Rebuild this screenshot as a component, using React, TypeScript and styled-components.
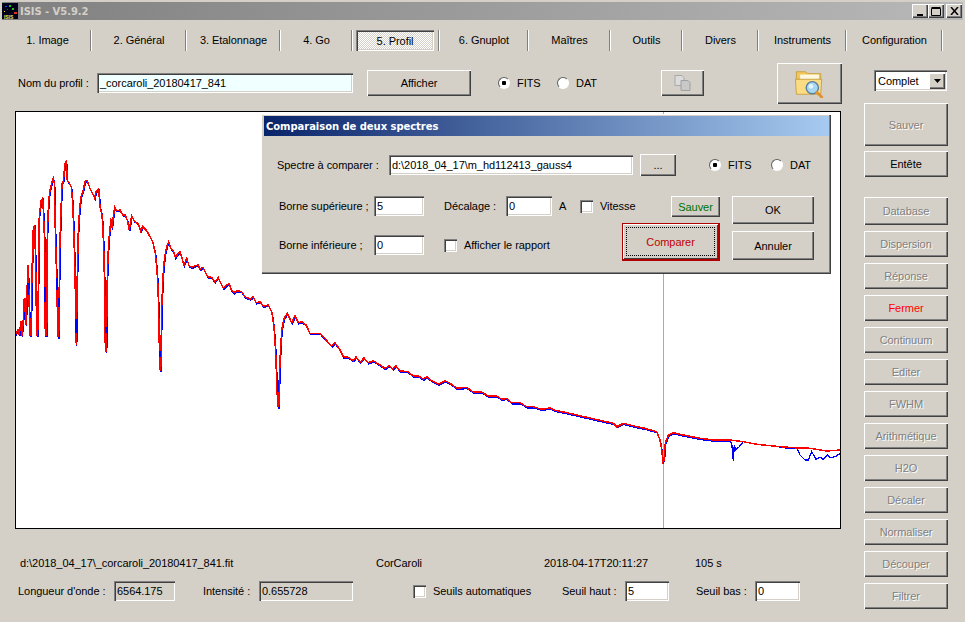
import React from 'react'
import styled, { createGlobalStyle, css } from 'styled-components'

const GlobalStyle = createGlobalStyle`
  html, body {
    margin: 0;
    padding: 0;
    background: #d4d0c8;
    overflow: hidden;
  }
  * {
    box-sizing: border-box;
  }
`

const raised = css`
  background-color: #d4d0c8;
  box-shadow: inset 1px 1px #fff, inset -1px -1px #404040, inset -2px -2px #808080;
`

const sunken = css`
  box-shadow: inset 1px 1px #808080, inset 2px 2px #404040, inset -1px -1px #fff, inset -2px -2px #d4d0c8;
`

const Window = styled.div`
  width: 965px;
  height: 622px;
  padding-top: 2px;
  background: #d4d0c8;
  color: #000;
  font-family: 'Liberation Sans', Arial, sans-serif;
  font-size: 11px;
  letter-spacing: -0.05px;
  overflow: hidden;
`

const TitleBar = styled.header`
  display: flex;
  align-items: center;
  height: 18px;
  margin-left: 2px;
  margin-right: 2px;
  background: linear-gradient(90deg, #808080, #b8b8b8);
`

const TitleText = styled.span`
  flex: 1;
  margin-left: 2px;
  color: #d4d0c8;
  font-family: 'DejaVu Sans', Verdana, sans-serif;
  font-size: 10px;
  font-weight: 700;
`

const WinControls = styled.div`
  display: flex;
  margin-right: 1px;
`

const WinButton = styled.button<{ $gap?: number }>`
  ${raised}
  width: 16px;
  height: 14px;
  margin-left: ${p => p.$gap ?? 0}px;
  padding: 0;
  border: 0;
  display: flex;
  align-items: center;
  justify-content: center;
`

const TabRow = styled.nav`
  display: flex;
  height: 21px;
  margin-top: 10px;
  padding-left: 4px;
`

const TabCell = styled.div<{ $width: number }>`
  display: flex;
  width: ${p => p.$width}px;
  border-right: 1px solid #fff;
  box-shadow: inset -1px 0 #808080;
`

const TabLabel = styled.div<{ $active?: boolean }>`
  flex: 1;
  display: flex;
  align-items: center;
  justify-content: center;
  padding-bottom: 2px;
  ${p =>
    p.$active &&
    css`
      margin: 0 5px 0 3px;
      padding: 1px 0 0;
      background-color: #fff;
      background-image: conic-gradient(#d4d0c8 25%, #fff 0 50%, #d4d0c8 0 75%, #fff 0);
      background-size: 2px 2px;
      ${sunken}
    `}
`

const Workspace = styled.main`
  display: flex;
  margin-top: 11px;
`

const LeftColumn = styled.section`
  width: 864px;
`

const FormRow = styled.div`
  display: flex;
  align-items: center;
  height: 42px;
`

const Label = styled.span<{ $left?: number; $width?: number }>`
  flex: none;
  margin-left: ${p => p.$left ?? 0}px;
  width: ${p => (p.$width ? `${p.$width}px` : 'auto')};
  white-space: nowrap;
`

const TextField = styled.div<{ $width: number; $left?: number; $height?: number; $tint?: string }>`
  ${sunken}
  flex: none;
  display: flex;
  align-items: center;
  width: ${p => p.$width}px;
  height: ${p => p.$height ?? 20}px;
  margin-left: ${p => p.$left ?? 0}px;
  padding-left: 3px;
  background: ${p => p.$tint ?? '#fff'};
  white-space: nowrap;
  overflow: hidden;
`

const PushButton = styled.button<{ $width: number; $height?: number; $left?: number; $muted?: boolean; $color?: string }>`
  ${raised}
  flex: none;
  display: flex;
  align-items: center;
  justify-content: center;
  width: ${p => p.$width}px;
  height: ${p => p.$height ?? 26}px;
  margin-left: ${p => p.$left ?? 0}px;
  padding: 0;
  border: 0;
  font: inherit;
  letter-spacing: inherit;
  color: ${p => p.$color ?? (p.$muted ? '#808080' : '#000')};
  text-shadow: ${p => (p.$muted ? '1px 1px 0 #fff' : 'none')};
`

const RadioDot = styled.span<{ $left?: number; $on?: boolean }>`
  flex: none;
  width: 12px;
  height: 12px;
  margin-left: ${p => p.$left ?? 0}px;
  margin-right: 7px;
  border-radius: 50%;
  border: 1px solid;
  border-color: #606060 #fff #fff #606060;
  background: ${p => (p.$on ? 'radial-gradient(circle, #000 0 2px, #fff 2.5px)' : '#fff')};
`

const CheckBox = styled.span<{ $left?: number }>`
  ${sunken}
  flex: none;
  width: 13px;
  height: 13px;
  margin-left: ${p => p.$left ?? 0}px;
  margin-right: 7px;
  background: #fff;
`

const Plot = styled.div`
  position: relative;
  width: 826px;
  height: 418px;
  margin-top: 7px;
  margin-left: 15px;
  border: 1px solid #000;
  background: #fff;
`

const PlotSvg = styled.svg`
  display: block;
`

const Dialog = styled.div`
  position: absolute;
  left: 245px;
  top: 2px;
  width: 570px;
  height: 160px;
  padding: 2px 2px 0 3px;
  ${raised}
`

const DialogTitle = styled.div`
  display: flex;
  align-items: center;
  height: 20px;
  padding-left: 2px;
  background: linear-gradient(90deg, #0a246a, #a6caf0);
  color: #fff;
  font-family: 'DejaVu Sans', Verdana, sans-serif;
  font-size: 10px;
  font-weight: 700;
`

const DialogRow = styled.div`
  display: flex;
  align-items: center;
  height: 22px;
  margin-top: 18px;
`

const DialogLower = styled.div`
  display: grid;
  grid-template-columns: 346px 98px 82px;
  column-gap: 12px;
  margin-top: 20px;
`

const FieldStack = styled.div`
  display: flex;
  flex-direction: column;
  gap: 19px;
`

const FieldRow = styled.div`
  display: flex;
  align-items: center;
  height: 20px;
`

const ActionStack = styled.div<{ $gap: number }>`
  display: flex;
  flex-direction: column;
  align-items: flex-end;
  gap: ${p => p.$gap}px;
`

const FocusButton = styled.button`
  width: 98px;
  height: 38px;
  padding: 3px;
  border: solid #b00000;
  border-width: 1px 2px 2px 1px;
  background: #d4d0c8;
  box-shadow: inset 1px 1px #fff, inset -1px -1px #404040;
  font: inherit;
  letter-spacing: inherit;
  color: #c00000;
`

const FocusInner = styled.span`
  display: flex;
  align-items: center;
  justify-content: center;
  height: 100%;
  border: 1px dotted #000;
`

const InfoRow = styled.div`
  display: flex;
  align-items: center;
  height: 16px;
  margin-top: 26px;
`

const ReadoutRow = styled.div`
  display: flex;
  align-items: center;
  height: 20px;
  margin-top: 10px;
`

const ReadOnly = styled(TextField)`
  background: #d4d0c8;
`

const RightColumn = styled.aside`
  width: 84px;
  padding-top: 8px;
`

const Combo = styled.div`
  ${sunken}
  display: flex;
  align-items: center;
  justify-content: space-between;
  width: 73px;
  height: 21px;
  margin-left: 10px;
  padding: 2px 2px 2px 4px;
  background: #fff;
`

const ComboArrow = styled.span`
  ${raised}
  display: flex;
  align-items: center;
  justify-content: center;
  width: 16px;
  height: 16px;
`

const SideStack = styled.div<{ $top: number }>`
  display: flex;
  flex-direction: column;
  gap: 6px;
  margin-top: ${p => p.$top}px;
`

const tabs = [
  { label: '1. Image', width: 88 },
  { label: '2. Général', width: 95 },
  { label: '3. Etalonnage', width: 94 },
  { label: '4. Go', width: 72 },
  { label: '5. Profil', width: 87, active: true },
  { label: '6. Gnuplot', width: 89 },
  { label: 'Maîtres', width: 82 },
  { label: 'Outils', width: 72 },
  { label: 'Divers', width: 76 },
  { label: 'Instruments', width: 88 },
  { label: 'Configuration', width: 96 },
]

const sideButtons = [
  'Database',
  'Dispersion',
  'Réponse',
  'Fermer',
  'Continuum',
  'Editer',
  'FWHM',
  'Arithmétique',
  'H2O',
  'Décaler',
  'Normaliser',
  'Découper',
  'Filtrer',
]

type Pt = [number, number]

// points read off 3x crops of the curve, origin is the crop corner
const fromCrop = (ox: number, oy: number, pts: Pt[]): Pt[] =>
  pts.map(([x, y]) => [ox + x / 3 - 16, oy + y / 3 - 112])

const blueShift = (pts: Pt[]): Pt[] => pts.map(([x, y]) => [x + 0.5, y + 1.2])

const toPath = (pts: Pt[]) => pts.map(([x, y]) => `${x.toFixed(1)},${y.toFixed(1)}`).join(' ')

const partA = fromCrop(10, 150, [
  [16, 555], [24, 540], [28, 555], [33, 512], [36, 558], [41, 492], [43, 445], [46, 445], [48, 525], [52, 400],
  [54, 345], [57, 440], [60, 555], [63, 555], [66, 350], [68, 325], [70, 235], [74, 228], [77, 350], [80, 555],
  [83, 555], [86, 320], [88, 195], [94, 150], [98, 145], [100, 180], [104, 280], [106, 555], [110, 555], [112, 250],
  [116, 150], [120, 120], [126, 95], [130, 85], [133, 100], [136, 240], [141, 420], [143, 560], [146, 560], [149, 300],
  [153, 180], [156, 100], [160, 95], [165, 40], [169, 35], [172, 90], [178, 100], [184, 110], [188, 160], [191, 235],
  [195, 370], [198, 550], [199, 585], [202, 370], [205, 245], [209, 175], [213, 140], [220, 120], [226, 92], [232, 92],
  [240, 115], [250, 135], [254, 145], [258, 125], [266, 118], [270, 170], [275, 190], [278, 220], [281, 295], [284, 420],
  [286, 590], [289, 605], [292, 380], [296, 270], [300, 240], [302, 205], [306, 235], [310, 200], [314, 172], [320, 182],
  [330, 180], [338, 195], [345, 195], [352, 210], [358, 240], [365, 198], [372, 212], [385, 222], [392, 243], [398, 230],
  [410, 242], [420, 260], [428, 275], [436, 310], [440, 350], [444, 410], [447, 530], [449, 655], [452, 662], [455, 470],
  [459, 380], [462, 340], [465, 315], [470, 290], [476, 275], [482, 295], [490, 302], [496, 322], [505, 310], [510, 305],
  [516, 325], [522, 345], [530, 325], [537, 347], [546, 352], [555, 347], [564, 345], [570, 358], [578, 352], [586, 365],
  [593, 380], [605, 382], [614, 395], [625, 383], [640, 415], [650, 405], [658, 402], [664, 420], [672, 428], [680, 422],
  [695, 425], [705, 440], [720, 447], [730, 440], [738, 458], [750, 455], [760, 468], [775, 465], [785, 485], [792, 530],
  [797, 610], [800, 690], [803, 770], [806, 770], [810, 630],
])

const partB = fromCrop(280, 270, [
  [5, 180], [12, 145], [22, 130], [35, 158], [45, 137], [55, 158], [65, 155], [78, 165], [90, 190], [120, 190],
  [140, 212], [155, 228], [165, 218], [180, 240], [190, 260], [205, 262], [220, 272], [228, 260], [240, 277], [252, 264],
  [265, 278], [280, 272], [300, 285], [315, 295], [328, 287], [338, 297], [347, 287], [360, 302], [383, 305], [400, 318],
  [415, 318], [430, 327], [440, 320], [455, 332], [475, 342], [495, 332], [515, 343], [530, 355], [560, 352], [580, 366],
  [605, 366], [625, 378], [650, 378], [665, 388], [680, 385], [695, 398], [720, 398], [740, 410], [760, 410], [785, 418],
  [810, 414], [825, 421], [860, 428], [900, 437],
])

const partC = fromCrop(480, 420, [
  [355, 0], [400, 10], [410, 20], [430, 10], [470, 20], [495, 25], [530, 35], [540, 60], [545, 90], [549, 125],
  [552, 120], [556, 70], [565, 45], [580, 38], [620, 47], [660, 55], [700, 60], [750, 60],
])

const redTail = fromCrop(480, 420, [
  [790, 65], [830, 73], [880, 78], [940, 83], [990, 85], [1040, 93], [1082, 90],
])

const blueTail = fromCrop(480, 420, [
  [755, 70], [760, 122], [763, 75], [767, 90], [778, 80], [790, 65], [830, 73], [880, 78], [925, 85], [950, 83],
  [960, 105], [975, 120], [985, 120], [995, 95], [1008, 118], [1020, 112], [1030, 118], [1042, 105], [1050, 113], [1065, 110],
  [1082, 100],
])

const redCurve = [...partA, ...partB, ...partC, ...redTail]
const blueCurve = [...blueShift([...partA, ...partB, ...partC]), ...blueTail]

// blue shows through the red at the bottom of the deep lines
const blueDips: Pt[][] = [
  fromCrop(10, 150, [[54, 400], [54, 435]]),
  fromCrop(10, 150, [[105, 410], [105, 455]]),
  fromCrop(10, 150, [[141, 385], [141, 420]]),
  fromCrop(10, 150, [[146, 445], [146, 470]]),
  fromCrop(10, 150, [[199, 507], [199, 550]]),
  fromCrop(10, 150, [[289, 530], [289, 548]]),
  fromCrop(10, 150, [[451, 603], [451, 620]]),
  fromCrop(10, 150, [[805, 690], [805, 725]]),
]

const Spectrum: React.FC = () => (
  <PlotSvg width={824} height={416} viewBox="0 0 824 416">
    <line x1={647.5} y1={0} x2={647.5} y2={416} stroke="#f0a030" strokeWidth={1} />
    <polyline points={toPath(blueCurve)} fill="none" stroke="#0000ff" strokeWidth={1.3} shapeRendering="crispEdges" />
    <polyline points={toPath(redCurve)} fill="none" stroke="#ff0000" strokeWidth={1.5} shapeRendering="crispEdges" />
    {blueDips.map((dip, i) => (
      <polyline key={i} points={toPath(dip)} fill="none" stroke="#0000ff" strokeWidth={2} shapeRendering="crispEdges" />
    ))}
  </PlotSvg>
)

const AppLogo: React.FC = () => (
  <svg width={16} height={16} viewBox="0 0 16 16">
    <rect width={16} height={16} fill="#000018" />
    <rect x={3} y={3} width={2} height={1} fill="#2040ff" />
    <rect x={7} y={2} width={2} height={2} fill="#20c020" />
    <rect x={10} y={5} width={2} height={2} fill="#20c020" />
    <rect x={5} y={6} width={1} height={1} fill="#2040ff" />
    <rect x={12} y={9} width={3} height={2} fill="#e03020" />
    <rect x={2} y={8} width={1} height={1} fill="#ffe000" />
    <text x={2} y={15.5} fontSize={5} fontFamily="'Liberation Sans', sans-serif" fontWeight={700} fill="#ffe060">
      ISIS
    </text>
  </svg>
)

const FolderSearchIcon: React.FC = () => (
  <svg width={31} height={30} viewBox="0 0 32 32">
    <path d="M2 4h10l2 2h14v6H2z" fill="#f2c75c" stroke="#c9a040" />
    <rect x={6} y={7} width={20} height={8} fill="#fff8e0" />
    <path d="M2 28 1 12h28l-1 16z" fill="#fbdc82" stroke="#c9a040" />
    <circle cx={19} cy={21} r={6.5} fill="#a8d8f0" stroke="#5a7fa0" strokeWidth={1.5} />
    <circle cx={17.5} cy={19.5} r={2.5} fill="#e4f5ff" />
    <path d="m24 26 5 5" stroke="#e09030" strokeWidth={3} strokeLinecap="round" />
  </svg>
)

const CopyIcon: React.FC = () => (
  <svg width={17} height={16} viewBox="0 0 17 16">
    <path d="M1 .5h7l2 2v8H1z" fill="#dcdcdc" stroke="#a8a8a8" />
    <path d="M7 5.500h7l2 2v8H7z" fill="#c8c8c8" stroke="#a0a0a0" />
  </svg>
)

const App: React.FC = () => (
  <Window>
    <GlobalStyle />
    <TitleBar>
      <AppLogo />
      <TitleText>ISIS - V5.9.2</TitleText>
      <WinControls>
        <WinButton>
          <svg width={9} height={9} viewBox="0 0 9 9">
            <rect x={1} y={7} width={6} height={2} fill="#000" />
          </svg>
        </WinButton>
        <WinButton>
          <svg width={10} height={9} viewBox="0 0 10 9">
            <path d="M.5 1.500h9v7h-9zM.5 .5h9" fill="none" stroke="#000" />
          </svg>
        </WinButton>
        <WinButton $gap={2}>
          <svg width={9} height={8} viewBox="0 0 9 8">
            <path d="m1 0 7 8M8 0 1 8" stroke="#000" strokeWidth={1.5} />
          </svg>
        </WinButton>
      </WinControls>
    </TitleBar>

    <TabRow>
      {tabs.map(tab => (
        <TabCell key={tab.label} $width={tab.width}>
          <TabLabel $active={tab.active}>{tab.label}</TabLabel>
        </TabCell>
      ))}
    </TabRow>

    <Workspace>
      <LeftColumn>
        <FormRow>
          <Label $left={18} $width={79}>Nom du profil :</Label>
          <TextField $width={256} $tint="#f0ffff">_corcaroli_20180417_841</TextField>
          <PushButton $width={104} $left={14}>Afficher</PushButton>
          <RadioDot $left={27} $on />
          <Label $width={23}>FITS</Label>
          <RadioDot $left={17} />
          <Label $width={25}>DAT</Label>
          <PushButton $width={43} $left={60}><CopyIcon /></PushButton>
          <PushButton $width={65} $height={41} $left={73}><FolderSearchIcon /></PushButton>
        </FormRow>

        <Plot>
          <Spectrum />
          <Dialog>
            <DialogTitle>Comparaison de deux spectres</DialogTitle>
            <DialogRow>
              <Label $left={13} $width={112}>Spectre à comparer  :</Label>
              <TextField $width={244}>d:\2018_04_17\m_hd112413_gauss4</TextField>
              <PushButton $width={36} $height={22} $left={7}>...</PushButton>
              <RadioDot $left={33} $on />
              <Label $width={26}>FITS</Label>
              <RadioDot $left={17} />
              <Label>DAT</Label>
            </DialogRow>
            <DialogLower>
              <FieldStack>
                <FieldRow>
                  <Label $left={15} $width={95}>Borne supérieure ;</Label>
                  <TextField $width={50}>5</TextField>
                  <Label $left={20} $width={62}>Décalage :</Label>
                  <TextField $width={46}>0</TextField>
                  <Label $left={7} $width={21}>A</Label>
                  <CheckBox />
                  <Label>Vitesse</Label>
                </FieldRow>
                <FieldRow>
                  <Label $left={15} $width={95}>Borne inférieure ;</Label>
                  <TextField $width={50}>0</TextField>
                  <CheckBox $left={20} />
                  <Label>Afficher le rapport</Label>
                </FieldRow>
              </FieldStack>
              <ActionStack $gap={6}>
                <PushButton $width={49} $height={21} $color="#007000">Sauver</PushButton>
                <FocusButton><FocusInner>Comparer</FocusInner></FocusButton>
              </ActionStack>
              <ActionStack $gap={7}>
                <PushButton $width={82} $height={28}>OK</PushButton>
                <PushButton $width={82} $height={29}>Annuler</PushButton>
              </ActionStack>
            </DialogLower>
          </Dialog>
        </Plot>

        <InfoRow>
          <Label $left={20} $width={356}>d:\2018_04_17\_corcaroli_20180417_841.fit</Label>
          <Label $width={168}>CorCaroli</Label>
          <Label $width={151}>2018-04-17T20:11:27</Label>
          <Label>105 s</Label>
        </InfoRow>
        <ReadoutRow>
          <Label $left={18} $width={96}>Longueur d'onde :</Label>
          <ReadOnly $width={61}>6564.175</ReadOnly>
          <Label $left={28} $width={56}>Intensité :</Label>
          <ReadOnly $width={94}>0.655728</ReadOnly>
          <CheckBox $left={60} />
          <Label $width={129}>Seuils automatiques</Label>
          <Label $width={63}>Seuil haut :</Label>
          <TextField $width={44}>5</TextField>
          <Label $left={27} $width={59}>Seuil bas :</Label>
          <TextField $width={45}>0</TextField>
        </ReadoutRow>
      </LeftColumn>

      <RightColumn>
        <Combo>
          Complet
          <ComboArrow>
            <svg width={7} height={4} viewBox="0 0 7 4">
              <path d="M0 0h7L3.500 4z" fill="#000" />
            </svg>
          </ComboArrow>
        </Combo>
        <SideStack $top={12}>
          <PushButton $width={84} $height={43} $muted>Sauver</PushButton>
        </SideStack>
        <SideStack $top={5}>
          <PushButton $width={84}>Entête</PushButton>
        </SideStack>
        <SideStack $top={20}>
          {sideButtons.map((name, i) => (
            <PushButton
              key={name}
              $width={84}
              $height={i === 0 ? 28 : 26}
              $muted={name !== 'Fermer'}
              $color={name === 'Fermer' ? '#ff0000' : undefined}
            >
              {name}
            </PushButton>
          ))}
        </SideStack>
      </RightColumn>
    </Workspace>
  </Window>
)

export default App
